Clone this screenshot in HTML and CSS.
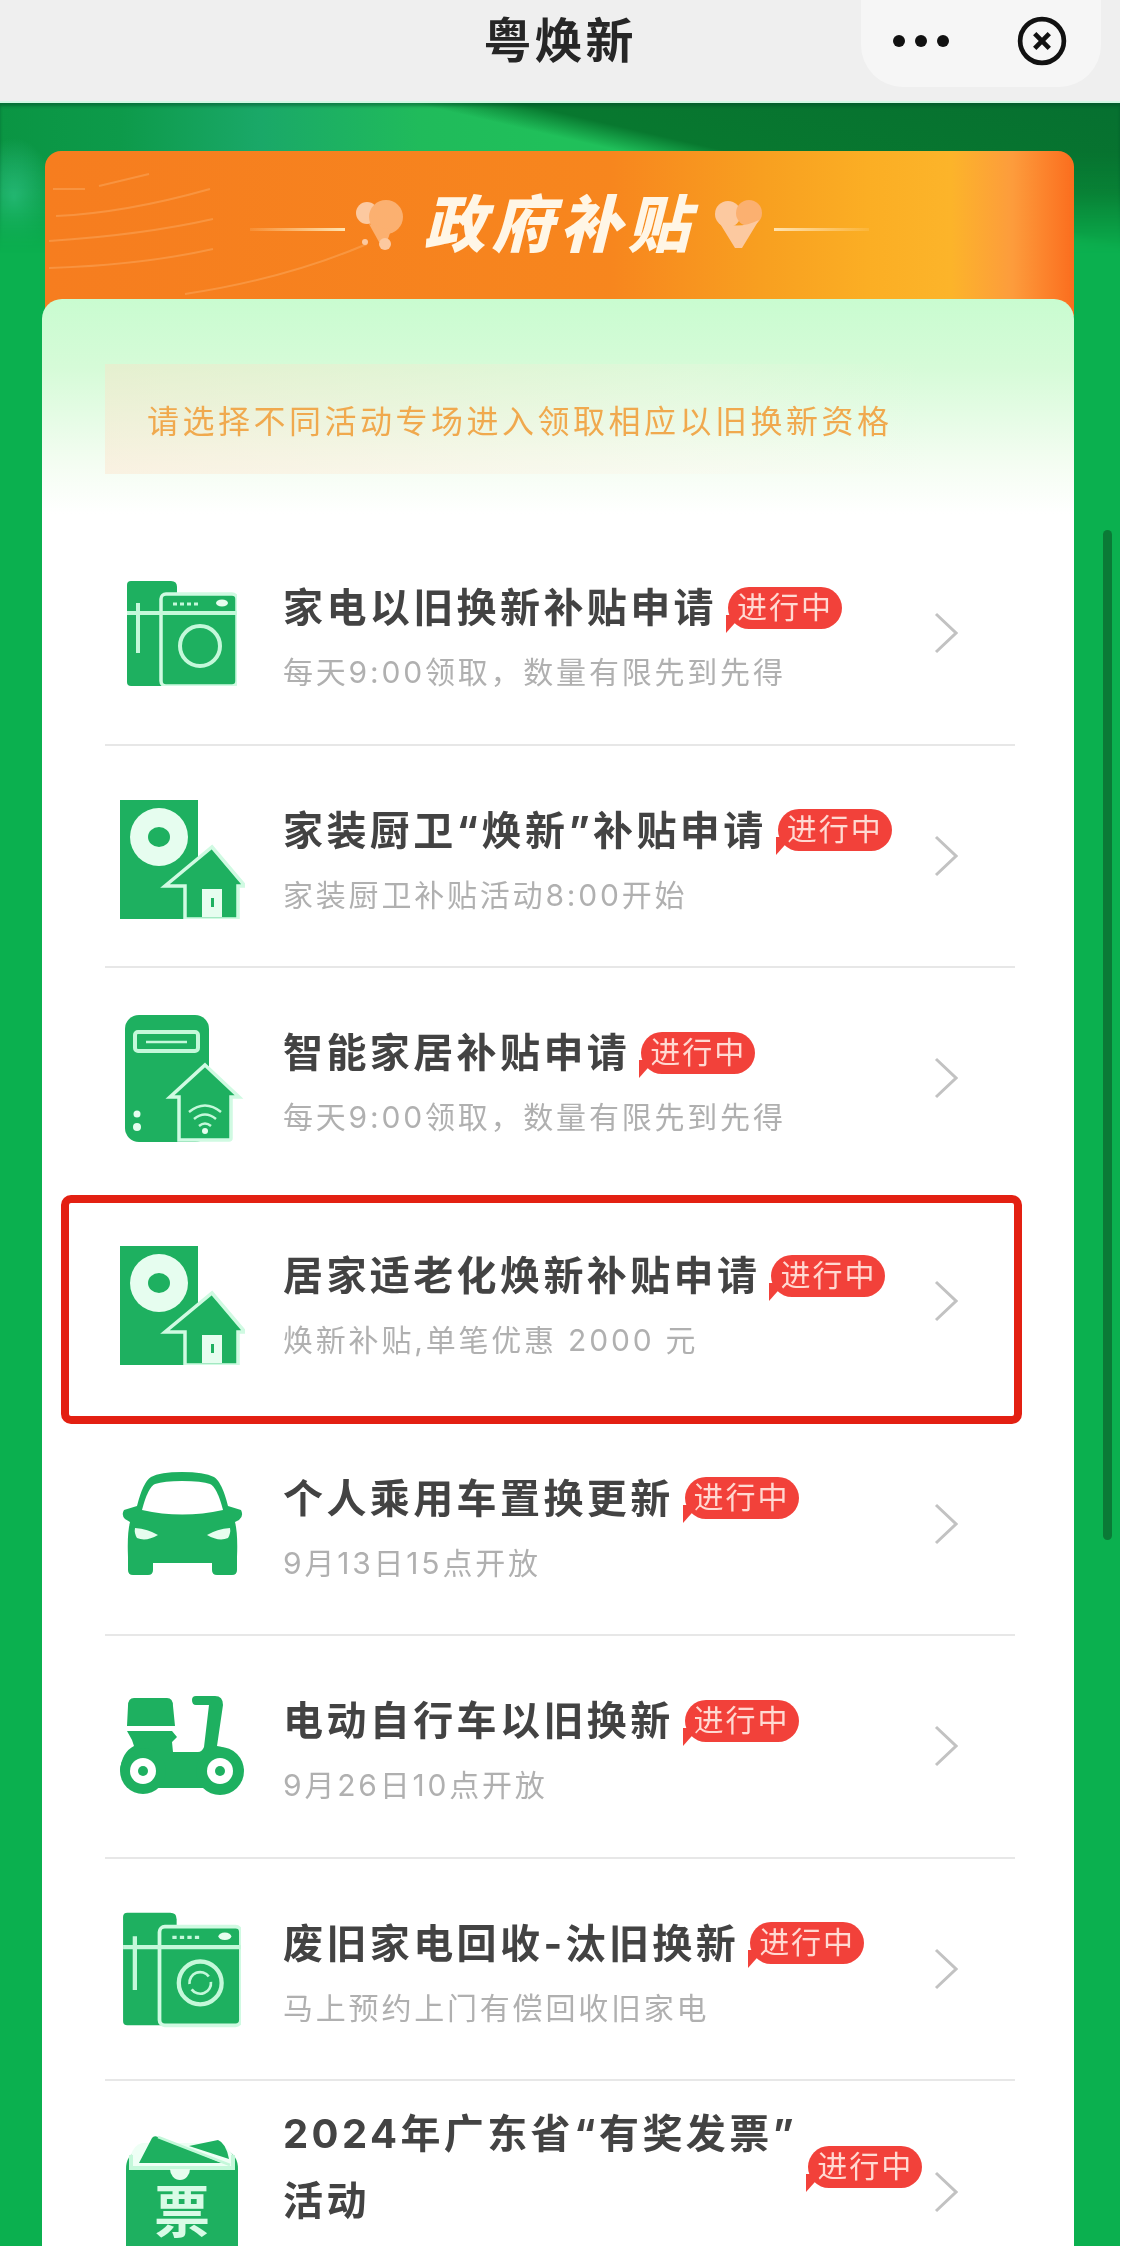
FILE: index.html
```html
<!DOCTYPE html>
<html lang="zh-CN">
<head>
    <meta charset="UTF-8">
    <meta name="viewport" content="width=device-width, initial-scale=1.0">
    <title>粤焕新</title>
    <link rel="stylesheet" href="styles.css">
</head>
<body>
    <svg class="defs" width="0" height="0">
        <symbol id="i-appliance" viewBox="0 0 110 105">
            <path class="ic" d="M4 0H44Q50 0 50 6V105H4Q0 105 0 101V4Q0 0 4 0Z"/>
            <rect class="ic ic-edge" x="34" y="13" width="76" height="92" rx="5"/>
            <path class="ln" d="M0 32H110M11 22V72"/>
            <path class="ln-dash" d="M46 23H72"/>
            <ellipse class="pale" cx="95" cy="22" rx="6" ry="3.5"/>
        </symbol>
        <symbol id="i-house" viewBox="0 0 125 119">
            <rect class="ic" width="78" height="119"/>
            <circle class="pale" cx="39" cy="37" r="29"/>
            <ellipse class="ic" cx="39" cy="37" rx="11" ry="10"/>
            <path class="ic ic-edge" d="M92 47L125 86H118V119H65V86H45Z"/>
            <rect class="pale" x="82" y="89" width="20" height="28"/>
            <rect class="ic" x="91" y="98" width="3" height="9"/>
        </symbol>
    </svg>

    <div class="page">
        <header class="nav">
            <span></span>
            <h1 class="nav-title">粤焕新</h1>
            <div class="capsule">
                <div class="dots"><i></i><i></i><i></i></div>
                <svg class="close" viewBox="0 0 48 48">
                    <circle cx="24" cy="24" r="21"/>
                    <path d="M17 17L31 31M31 17L17 31"/>
                </svg>
            </div>
        </header>

        <main class="content">
            <div class="banner">
                <svg class="banner-lines" viewBox="0 0 330 165">
                    <path d="M8 38H40M54 35L104 23M11 65Q80 62 165 38M4 90Q97 84 168 68M4 117Q97 114 168 98M140 143Q240 128 322 93"/>
                </svg>
                <span class="banner-rule"></span>
                <svg class="balloon" viewBox="0 0 50 50">
                    <circle class="b-light" cx="12" cy="13" r="11"/>
                    <circle class="b-main" cx="31" cy="17" r="17"/>
                    <path class="b-main" d="M14 24L36 30L32 42H24Z"/>
                    <circle class="b-light" cx="30" cy="44" r="6"/>
                    <circle class="b-light" cx="10" cy="42" r="3"/>
                </svg>
                <h2 class="banner-title">政府补贴</h2>
                <svg class="balloon" viewBox="0 0 50 50">
                    <circle class="b-light" cx="14" cy="14" r="13"/>
                    <circle class="b-main" cx="35" cy="13" r="13"/>
                    <path class="b-light" d="M5 22Q25 30 45 20L28 48H21Z"/>
                </svg>
                <span class="banner-rule"></span>
            </div>

            <section class="card">
                <div class="notice">请选择不同活动专场进入领取相应以旧换新资格</div>

                <div class="row">
                    <div class="icon">
                        <svg width="110" height="105" viewBox="0 0 110 105">
                            <use href="#i-appliance"/>
                            <circle class="ln" cx="73" cy="65" r="20"/>
                        </svg>
                    </div>
                    <div class="text">
                        <div class="head"><span class="name">家电以旧换新补贴申请</span><span class="tag">进行中</span></div>
                        <p class="sub">每天9:00领取，数量有限先到先得</p>
                    </div>
                    <svg class="chev" viewBox="0 0 24 42"><path d="M2 2L22 21L2 40"/></svg>
                </div>

                <div class="row">
                    <div class="icon icon-low">
                        <svg width="125" height="119" viewBox="0 0 125 119"><use href="#i-house"/></svg>
                    </div>
                    <div class="text">
                        <div class="head"><span class="name">家装厨卫“焕新”补贴申请</span><span class="tag">进行中</span></div>
                        <p class="sub">家装厨卫补贴活动8:00开始</p>
                    </div>
                    <svg class="chev" viewBox="0 0 24 42"><path d="M2 2L22 21L2 40"/></svg>
                </div>

                <div class="row row-plain">
                    <div class="icon">
                        <svg width="114" height="127" viewBox="0 0 114 127">
                            <rect class="ic" width="84" height="127" rx="14"/>
                            <rect class="ln" x="10" y="17" width="63" height="19" rx="3"/>
                            <path class="ln-thin" d="M21 27H62"/>
                            <circle class="pale" cx="12" cy="99" r="3.5"/>
                            <circle class="pale" cx="12" cy="112" r="4"/>
                            <path class="ic ic-edge" d="M80 50L114 82H106V123Q106 125 104 125H54V82H45Z"/>
                            <path class="ln-thin" d="M64 97Q80 84 96 97M69 104Q80 95 91 104M74 111Q80 106 86 111"/>
                            <circle class="pale" cx="80" cy="116" r="3"/>
                        </svg>
                    </div>
                    <div class="text">
                        <div class="head"><span class="name">智能家居补贴申请</span><span class="tag">进行中</span></div>
                        <p class="sub">每天9:00领取，数量有限先到先得</p>
                    </div>
                    <svg class="chev" viewBox="0 0 24 42"><path d="M2 2L22 21L2 40"/></svg>
                </div>

                <div class="row row-plain row-mark">
                    <div class="icon icon-low">
                        <svg width="125" height="119" viewBox="0 0 125 119"><use href="#i-house"/></svg>
                    </div>
                    <div class="text">
                        <div class="head"><span class="name">居家适老化焕新补贴申请</span><span class="tag">进行中</span></div>
                        <p class="sub">焕新补贴,单笔优惠 2000 元</p>
                    </div>
                    <svg class="chev" viewBox="0 0 24 42"><path d="M2 2L22 21L2 40"/></svg>
                </div>

                <div class="row">
                    <div class="icon">
                        <svg width="121" height="103" viewBox="0 0 121 103">
                            <path class="ic" d="M60 0Q82 0 92 5Q100 10 106 34L119 38Q122 44 117 48L113 50Q116 62 115 85V98Q115 103 110 103H95Q90 103 90 98V91H31V98Q31 103 26 103H11Q6 103 6 98V85Q5 62 8 50L3 47Q-1 43 2 38L15 34Q21 10 29 5Q38 0 60 0Z"/>
                            <path class="white" d="M20 38Q26 15 33 12Q42 9 60 9Q80 9 88 12Q95 15 101 38Q60 47 20 38Z"/>
                            <path class="pale" d="M13 56Q26 57 36 63Q24 70 15 66Q12 61 13 56ZM108 56Q95 57 85 63Q97 70 106 66Q109 61 108 56Z"/>
                        </svg>
                    </div>
                    <div class="text">
                        <div class="head"><span class="name">个人乘用车置换更新</span><span class="tag">进行中</span></div>
                        <p class="sub">9月13日15点开放</p>
                    </div>
                    <svg class="chev" viewBox="0 0 24 42"><path d="M2 2L22 21L2 40"/></svg>
                </div>

                <div class="row">
                    <div class="icon">
                        <svg width="124" height="100" viewBox="0 0 124 100">
                            <path class="ic" d="M14 2H47Q53 2 53 10L55 30H7L8 10Q8 2 14 2Z"/>
                            <path class="ic" d="M7 35H52L57 41L52 46L53 56H78Q82 56 84 51L89 9H76Q72 9 72 4Q72 0 76 0H95Q103 0 103 9L97 50Q114 52 124 74L100 92H23L0 74Q2 56 14 50L12 44Z"/>
                            <circle class="ic" cx="23" cy="75" r="23"/>
                            <circle class="ic" cx="100" cy="75" r="24"/>
                            <circle class="white" cx="23" cy="75" r="13"/>
                            <circle class="ic" cx="23" cy="75" r="5"/>
                            <circle class="white" cx="100" cy="75" r="13"/>
                            <circle class="ic" cx="100" cy="75" r="5"/>
                        </svg>
                    </div>
                    <div class="text">
                        <div class="head"><span class="name">电动自行车以旧换新</span><span class="tag">进行中</span></div>
                        <p class="sub">9月26日10点开放</p>
                    </div>
                    <svg class="chev" viewBox="0 0 24 42"><path d="M2 2L22 21L2 40"/></svg>
                </div>

                <div class="row">
                    <div class="icon">
                        <svg width="118" height="120" viewBox="0 0 110 112">
                            <use href="#i-appliance" width="110" height="112" preserveAspectRatio="none"/>
                            <circle class="ln" cx="72" cy="69" r="20"/>
                            <path class="ln-thin" d="M62 70A10 10 0 0 1 80 63M82 68A10 10 0 0 1 64 75"/>
                        </svg>
                    </div>
                    <div class="text">
                        <div class="head"><span class="name">废旧家电回收-汰旧换新</span><span class="tag">进行中</span></div>
                        <p class="sub">马上预约上门有偿回收旧家电</p>
                    </div>
                    <svg class="chev" viewBox="0 0 24 42"><path d="M2 2L22 21L2 40"/></svg>
                </div>

                <div class="row row-last">
                    <div class="icon">
                        <svg width="112" height="130" viewBox="0 0 112 130">
                            <path class="ic" d="M0 34Q0 20 12 15H100Q112 20 112 34V130H0Z"/>
                            <path class="pocket" d="M5 20V33H107V20Q100 10 90 8H16Q8 10 5 20Z"/>
                            <path class="ic" d="M13 28L26 3Q28 0 32 2L96 28Z"/>
                            <path class="ic" d="M63 11L92 5Q100 8 103 24Z"/>
                            <path class="ln-thin" d="M32 2L104 30"/>
                            <path class="ln" d="M5 20V33H107V20"/>
                            <path class="pale" d="M44 34A10 11 0 0 0 64 34Z"/>
                            <text class="ticket" x="56" y="97">票</text>
                        </svg>
                    </div>
                    <div class="text">
                        <div class="head"><span class="name">2024年广东省“有奖发票”<br>活动</span><span class="tag">进行中</span></div>
                    </div>
                    <svg class="chev" viewBox="0 0 24 42"><path d="M2 2L22 21L2 40"/></svg>
                </div>
            </section>
            <div class="scrollbar"></div>
        </main>
    </div>
</body>
</html>
```

FILE: styles.css
```css
html, body {
    margin: 0;
    padding: 0;
    background: #fff;
}

body {
    width: 1125px;
    height: 2246px;
    overflow: hidden;
    font-family: Inter, "Noto Sans CJK SC", "Noto Sans", sans-serif;
}

.defs {
    display: block;
}

.page {
    width: 1120px;
    height: 2246px;
    overflow: hidden;
    display: flex;
    flex-direction: column;
    filter: blur(0.6px);
}

/* Barra superior */
.nav {
    flex: none;
    height: 103px;
    box-sizing: border-box;
    background: #efefef;
    border-bottom: 2px solid #d2f8e4;
    display: grid;
    grid-template-columns: 1fr auto 1fr;
    align-items: start;
}

.nav-title {
    margin: 0;
    font-size: 48px;
    line-height: 82px;
    font-weight: 700;
    letter-spacing: 3px;
    color: #262626;
}

.capsule {
    justify-self: end;
    width: 240px;
    height: 87px;
    margin-right: 19px;
    border-radius: 0 0 42px 42px;
    background: #f6f6f6;
    display: flex;
    align-items: center;
    box-sizing: border-box;
    padding: 0 34px 5px 32px;
    justify-content: space-between;
}

.dots {
    display: flex;
    gap: 10px;
}

.dots i {
    width: 12px;
    height: 12px;
    border-radius: 50%;
    background: #111;
}

.close {
    width: 50px;
    height: 50px;
}

.close circle, .close path {
    fill: none;
    stroke: #111;
    stroke-width: 4.5;
}

/* Fondo verde */
.content {
    flex: 1;
    position: relative;
    padding: 48px 46px 0 42px;
    background: #0bb04f;
}

.content::before {
    content: "";
    position: absolute;
    left: 0;
    right: 0;
    top: 0;
    height: 150px;
    background:
        radial-gradient(ellipse 40px 60px at 14px 95px, #2ab87c, rgba(42, 184, 124, 0)),
        linear-gradient(13deg, rgba(8, 118, 48, 0) 60%, #08782f 66%, #067030 100%),
        linear-gradient(90deg, #0a9543 0, #0d9a4a 120px, #1aa868 260px, #20bb5b 420px, #20c05a 560px);
    -webkit-mask-image: linear-gradient(#000 50px, rgba(0, 0, 0, .8) 90px, transparent 150px);
    mask-image: linear-gradient(#000 50px, rgba(0, 0, 0, .8) 90px, transparent 150px);
    box-shadow: inset 0 3px 3px rgba(0, 70, 40, .45);
}

.banner {
    height: 165px;
    margin: 0 0 -17px 3px;
    border-radius: 16px 16px 0 0;
    background: linear-gradient(90deg, #f67d1f 0, #f7861e 55%, #f8a020 70%, #fbae24 80%, #fcb42a 88%, #fd9c3c 94%, #fb6d1e 100%);
    position: relative;
    display: flex;
    align-items: center;
    justify-content: center;
    padding-bottom: 18px;
    box-sizing: border-box;
    gap: 10px;
}

.banner-lines {
    position: absolute;
    left: 0;
    top: 0;
    width: 330px;
    height: 165px;
}

.banner-lines path {
    fill: none;
    stroke: rgba(255, 205, 150, .28);
    stroke-width: 2;
}

.banner-rule {
    width: 95px;
    height: 3px;
    margin-top: 10px;
    background: linear-gradient(90deg, rgba(255,225,170,.15), #ffe3b0);
}

.banner-rule:last-child {
    background: linear-gradient(90deg, #ffe3b0, rgba(255,225,170,.15));
}

.balloon {
    width: 50px;
    height: 50px;
}

.b-main {
    fill: #fbb070;
}

.b-light {
    fill: #fcc9a0;
}

.banner-title {
    margin: 0 8px;
    font-size: 62px;
    line-height: 74px;
    font-weight: 900;
    font-style: italic;
    letter-spacing: 6px;
    color: #fff6e6;
}

/* Tarjeta */
.card {
    position: relative;
    height: 1960px;
    box-sizing: border-box;
    padding: 65px 59px 0 63px;
    border-radius: 20px 20px 0 0;
    background: linear-gradient(180deg, #c9fcd0 0, #d6fbd8 70px, #f4fdf2 165px, #fff 215px);
}

.notice {
    height: 110px;
    margin: 0 -59px 49px 0;
    padding-left: 42px;
    font-size: 32px;
    line-height: 116px;
    letter-spacing: 3.5px;
    color: #f0a94e;
    background: linear-gradient(90deg, rgba(255, 222, 195, .38), rgba(255, 240, 225, .2) 60%, rgba(255, 255, 255, 0) 85%);
}

.row {
    box-sizing: border-box;
    min-height: 222.6px;
    padding: 7px 57px 7px 0;
    display: flex;
    align-items: center;
    border-bottom: 2px solid #e7e7e7;
    position: relative;
}

.row-plain {
    border-bottom-color: transparent;
}

/* Recuadro rojo sobre la fila */
.row-mark::after {
    content: "";
    position: absolute;
    left: -44px;
    right: -7px;
    top: 4px;
    bottom: -13px;
    border: 8px solid #e32012;
    border-radius: 10px;
    pointer-events: none;
}

.row-last {
    border-bottom: none;
}

.row-last .text {
    align-self: flex-start;
}

.row-last .icon {
    margin-top: 16px;
}

.icon {
    flex: none;
    width: 154px;
    margin-right: 24px;
    display: flex;
    justify-content: center;
}

.icon-low {
    margin-top: 8px;
}

.icon svg {
    display: block;
    overflow: visible;
}

.ic {
    fill: #1eb060;
}

.ic-edge {
    stroke: #d0fae2;
    stroke-width: 3.5;
}

.ln {
    fill: none;
    stroke: #c4f8da;
    stroke-width: 4;
}

.ln-thin {
    fill: none;
    stroke: #c4f8da;
    stroke-width: 2.5;
}

.ln-dash {
    fill: none;
    stroke: #c4f8da;
    stroke-width: 3;
    stroke-dasharray: 4 3;
}

.pale {
    fill: #e6fdef;
}

.pocket {
    fill: #eefff5;
}

.white {
    fill: #fff;
}

.ticket {
    fill: #d8fbe6;
    font-size: 56px;
    font-weight: 700;
    text-anchor: middle;
}

.text {
    flex: 1;
    min-width: 0;
    padding-top: 12px;
}

.head {
    display: flex;
    align-items: center;
}

.name {
    font-size: 40px;
    line-height: 67px;
    font-weight: 700;
    letter-spacing: 3.4px;
    color: #434343;
    white-space: nowrap;
}

.tag {
    position: relative;
    flex: none;
    margin-left: 11px;
    width: 114px;
    height: 42px;
    border-radius: 21px;
    background: #f2413a;
    color: #ffd9d2;
    font-size: 30px;
    line-height: 40px;
    text-align: center;
    letter-spacing: 2px;
}

.tag::after {
    content: "";
    position: absolute;
    left: -2px;
    bottom: -4px;
    border-style: solid;
    border-width: 18px 16px 0 0;
    border-color: #f2413a transparent transparent transparent;
}

.sub {
    margin: 0;
    font-size: 30px;
    line-height: 63px;
    letter-spacing: 2.8px;
    color: #b0b0b0;
    white-space: nowrap;
}

.chev {
    flex: none;
    width: 24px;
    height: 42px;
}

.chev path {
    fill: none;
    stroke: #c2c2c2;
    stroke-width: 3;
}

.scrollbar {
    position: absolute;
    left: 1103px;
    top: 427px;
    width: 9px;
    height: 1010px;
    border-radius: 5px;
    background: #0a7a36;
}
```
